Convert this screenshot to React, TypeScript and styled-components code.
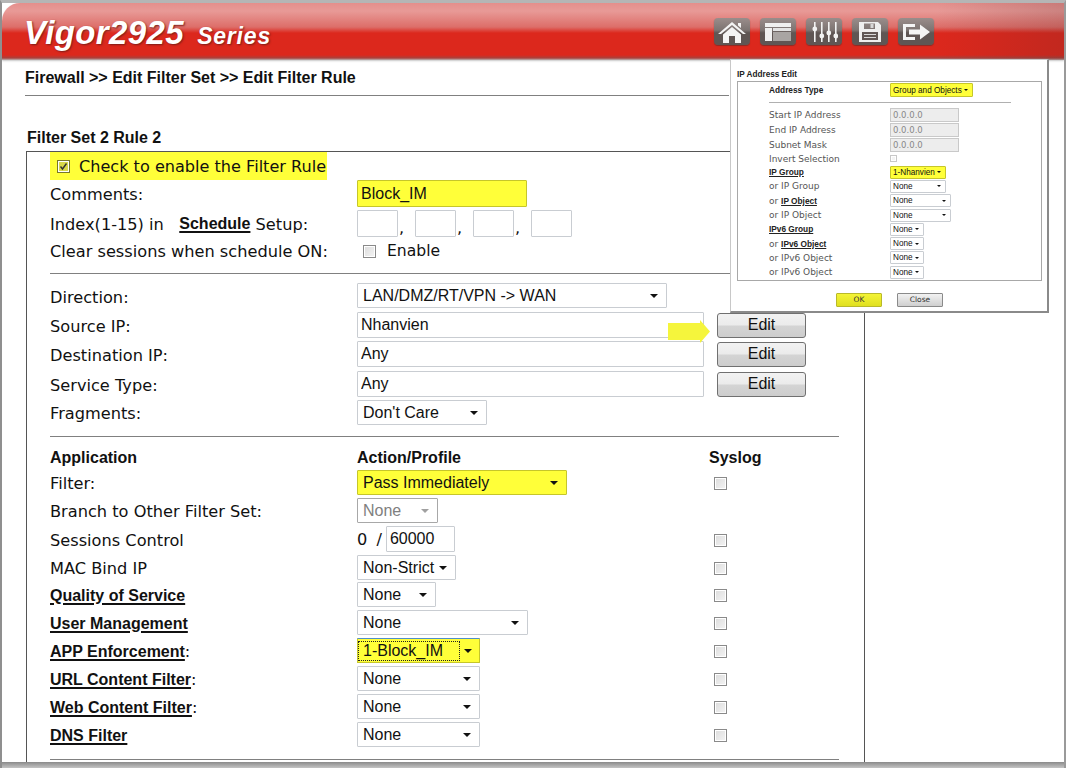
import React from 'react';
import styled, { createGlobalStyle } from 'styled-components';

const GlobalStyle = createGlobalStyle`
  html,
  body {
    margin: 0;
    padding: 0;
    background: #ffffff;
  }
`;

const controlFont = `'Liberation Sans', Arial, sans-serif`;

const Page = styled.div`
  position: relative;
  width: 1066px;
  height: 768px;
  box-sizing: border-box;
  overflow: hidden;
  background: #ffffff;
  border-top: 3px solid #b5b5b5;
  border-left: 2px solid #8f8f8f;
  border-right: 2px solid #9a9a9a;
  color: #111111;
  font-family: 'DejaVu Sans', sans-serif;
`;

const Header = styled.div`
  height: 57px;
  display: flex;
  align-items: flex-start;
  justify-content: space-between;
  padding: 0 130px 0 22px;
  border-radius: 18px 0 0 0;
  background:
    linear-gradient(to right, rgba(90, 40, 40, 0) 88%, rgba(90, 40, 40, 0.2) 100%),
    linear-gradient(
      to bottom,
      #e48f8c 0,
      #e89a97 8px,
      #dd6e69 24px,
      #dc281d 30px,
      #dc281c 52px,
      #a9413c 55px,
      #b9b1b0 57px
    );
  box-shadow: 0 1px 2px #c8c8c8;
`;

const Logo = styled.div`
  display: flex;
  align-items: baseline;
  gap: 13px;
  margin-top: 11px;
  color: #ffffff;
  font-family: 'Liberation Sans', sans-serif;
  font-style: italic;
  font-weight: 700;
  text-shadow: 1px 1px 2px #7a1d18;
`;

const LogoName = styled.span`
  font-size: 33px;
  letter-spacing: 0.4px;
`;

const LogoSeries = styled.span`
  font-size: 23px;
  letter-spacing: 0.8px;
`;

const IconBar = styled.div`
  display: flex;
  gap: 10px;
  margin-top: 15px;
`;

const IconButton = styled.div`
  width: 36px;
  height: 27px;
  display: flex;
  align-items: center;
  justify-content: center;
  border-radius: 4px;
  background: linear-gradient(to bottom, #9a8d8b, #7d7472 45%, #5f5654 55%, #5f5654);
  box-shadow: 0 1px 1px #8c2a25;
`;

const Content = styled.div`
  padding: 0 0 0 23px;
`;

const Breadcrumb = styled.div`
  padding-top: 8px;
  height: 36px;
  line-height: 19px;
  font-family: 'Liberation Sans', sans-serif;
  font-size: 16px;
  font-weight: 700;
  box-sizing: border-box;
  margin-right: 335px;
  border-bottom: 1px solid #808080;
`;

const SetTitle = styled.div`
  margin-top: 32px;
  height: 23px;
  line-height: 19px;
  padding-left: 2px;
  font-family: 'Liberation Sans', sans-serif;
  font-size: 16px;
  font-weight: 700;
`;

const Panel = styled.div`
  box-sizing: border-box;
  width: 839px;
  margin-left: 1px;
  height: 612px;
  padding: 0 25px 0 23px;
  border: 1px solid #555555;
  border-bottom: none;
`;

const EnableRow = styled.div`
  width: 277px;
  height: 28px;
  display: flex;
  align-items: center;
  gap: 9px;
  padding-left: 7px;
  box-sizing: border-box;
  background: #ffff39;
  font-size: 16.1px;
  white-space: nowrap;
`;

const Row = styled.div<{ $h: number }>`
  display: grid;
  grid-template-columns: 307px 352px 1fr;
  align-items: center;
  height: ${(p) => p.$h}px;
  font-size: 16.2px;
  white-space: nowrap;
`;

const Label = styled.div`
  display: flex;
  align-items: center;
  margin-bottom: 2px;
`;

const TopLabel = styled(Label)`
  margin-bottom: 0;
`;

const LinkLabel = styled.span`
  font-family: 'Liberation Sans', sans-serif;
  font-size: 16px;
  font-weight: 700;
  text-decoration: underline;
  text-underline-offset: 2px;
  text-decoration-thickness: 1.5px;
`;

const BoldLabel = styled.span`
  font-family: 'Liberation Sans', sans-serif;
  font-size: 16px;
  font-weight: 700;
`;

const Divider = styled.div<{ $top: number; $bottom: number }>`
  height: 1px;
  margin: ${(p) => p.$top}px 0 ${(p) => p.$bottom}px;
  background: #808080;
`;

const Cell = styled.div`
  display: flex;
  align-items: center;
  margin-bottom: 4px;
`;

const TopCell = styled(Cell)`
  margin-bottom: 2px;
`;

const TextBox = styled.input<{ $w: number; $h?: number; $mark?: boolean }>`
  box-sizing: border-box;
  flex: none;
  width: ${(p) => p.$w}px;
  height: ${(p) => p.$h ?? 26}px;
  margin: 0;
  padding: 0 3px;
  border: 1px solid ${(p) => (p.$mark ? '#c6c62a' : '#c9cdd2')};
  border-radius: 1px;
  outline: none;
  background: ${(p) => (p.$mark ? '#ffff39' : '#ffffff')};
  color: #111111;
  font-family: ${controlFont};
  font-size: 16px;
`;

const Comma = styled.span`
  width: 17px;
  padding-left: 1px;
  align-self: flex-end;
  box-sizing: border-box;
`;

const Check = styled.span<{ $light?: boolean; $size?: number }>`
  box-sizing: border-box;
  flex: none;
  display: inline-flex;
  align-items: center;
  justify-content: center;
  width: ${(p) => p.$size ?? 13}px;
  height: ${(p) => p.$size ?? 13}px;
  border: 1px solid ${(p) => (p.$light ? '#c8c8c8' : '#8a8a8a')};
  background: ${(p) =>
    p.$light ? '#f4f4f4' : 'linear-gradient(135deg, #dcdcdc, #f4f4f4)'};
  box-shadow: inset 0 0 0 1px #ffffff;
`;

const MarkedCheck = styled(Check)`
  border-color: #77772a;
  background: #d8d84a;
`;

const EnableCheck = styled(Check)`
  margin-left: 6px;
`;

const EnableText = styled.span`
  margin-left: 11px;
  font-size: 15.6px;
`;

const Select = styled.div<{
  $w: number;
  $h?: number;
  $mark?: boolean;
  $off?: boolean;
  $small?: boolean;
}>`
  box-sizing: border-box;
  flex: none;
  width: ${(p) => p.$w}px;
  height: ${(p) => p.$h ?? 25}px;
  display: flex;
  align-items: center;
  justify-content: space-between;
  padding: ${(p) => (p.$small ? '0 4px 0 2px' : '0 8px 0 5px')};
  border: 1px solid
    ${(p) => (p.$mark ? '#c6c62a' : p.$off ? '#a8a8a8' : '#c9cdd2')};
  border-radius: 1px;
  background: ${(p) => (p.$mark ? '#ffff39' : '#ffffff')};
  color: ${(p) => (p.$off ? '#808080' : '#111111')};
  font-family: ${controlFont};
  font-size: ${(p) => (p.$small ? '8.2px' : '16px')};
  white-space: nowrap;

  &::after {
    content: '';
    border-style: solid;
    border-width: ${(p) => (p.$small ? '2px 2px 0' : '4px 4px 0')};
    border-color: ${(p) => (p.$off ? '#a0a0a0' : '#111111')} transparent
      transparent;
  }
`;

const FocusText = styled.span`
  flex: 1;
  margin: 0 5px 0 -4px;
  padding: 0 0 0 4px;
  outline: 1px dotted #222222;
`;

const FocusSelect = styled(Select)`
  padding-right: 7px;
  border-top-color: #4f8fc8;
`;

const EditButton = styled.button`
  box-sizing: border-box;
  flex: none;
  width: 89px;
  height: 25px;
  margin: 0 0 0 13px;
  padding: 0;
  border: 1px solid #707070;
  border-radius: 3px;
  background: linear-gradient(to bottom, #f2f2f2 0, #ebebeb 48%, #d4d4d4 52%, #cdcdcd 100%);
  color: #111111;
  font-family: ${controlFont};
  font-size: 16px;
`;

const SourceCell = styled(Cell)`
  position: relative;
`;

const Arrow = styled.svg`
  position: absolute;
  left: 311px;
  top: 8px;
`;

const SyslogCell = styled.div`
  padding-left: 5px;
  margin-bottom: 2px;
  display: flex;
  align-items: center;
`;

const Slash = styled.span`
  margin: 0 4px 0 4px;
`;

const Popup = styled.div`
  position: absolute;
  left: 728px;
  top: 56px;
  box-sizing: border-box;
  width: 319px;
  height: 254px;
  padding: 9px 5px 0 6px;
  background: #ffffff;
  border: 1px solid #c8c8c8;
  border-right: 2px solid #8a8a8a;
  border-bottom: 2px solid #8a8a8a;
  font-size: 9px;
  color: #555555;
`;

const PopupTitle = styled.div`
  height: 12px;
  line-height: 12px;
  font-family: 'Liberation Sans', sans-serif;
  font-size: 8.2px;
  font-weight: 700;
  color: #222222;
`;

const PopupBox = styled.div`
  box-sizing: border-box;
  height: 200px;
  padding: 0 0 0 31px;
  border: 1px solid #a8a8a8;
`;

const PopupRow = styled.div<{ $h?: number }>`
  display: grid;
  grid-template-columns: 121px 1fr;
  align-items: center;
  height: ${(p) => p.$h ?? 14.3}px;
  white-space: nowrap;
`;

const PopupHead = styled.span`
  font-family: 'Liberation Sans', sans-serif;
  font-size: 8.3px;
  font-weight: 700;
  color: #222222;
`;

const PopupLink = styled(PopupHead)`
  text-decoration: underline;
`;

const PopupDivider = styled.div`
  height: 1px;
  width: 242px;
  margin: 4px 0 4px;
  background: #b0b0b0;
`;

const GreyBox = styled.div`
  box-sizing: border-box;
  width: 69px;
  height: 14px;
  padding-left: 2px;
  line-height: 13px;
  background: #ededed;
  border: 1px solid #c9c9c9;
  color: #888888;
  font-size: 8.5px;
`;

const PopupFooter = styled.div`
  display: flex;
  justify-content: center;
  gap: 15px;
  padding: 12px 0 0;
`;

const PopupButton = styled.div<{ $mark?: boolean }>`
  box-sizing: border-box;
  width: 46px;
  height: 14px;
  line-height: 12px;
  text-align: center;
  font-size: 7.5px;
  border: 1px solid ${(p) => (p.$mark ? '#b9b92a' : '#8a8a8a')};
  border-radius: 1px;
  color: #333333;
  background: ${(p) =>
    p.$mark
      ? 'linear-gradient(to bottom, #f4f436, #e0e020)'
      : 'linear-gradient(to bottom, #f2f2f2, #cfcfcf)'};
`;

const Shade = styled.div`
  position: absolute;
  left: 0;
  right: 0;
  bottom: 0;
  height: 6px;
  background: linear-gradient(to bottom, #8a8a8a, #c4c4c4);
`;

const HomeIcon = () => (
  <svg width="30" height="24" viewBox="0 0 30 24">
    <path d="M15 2 L29 14 L26 14 L15 5 L4 14 L1 14 Z M21 3 h3 v5 l-3 -2.5 Z" fill="#f4f4f4" />
    <path d="M6 14.5 L15 7 L24 14.5 V23 H18 V16 H12 V23 H6 Z" fill="#f4f4f4" />
  </svg>
);

const PanelIcon = () => (
  <svg width="28" height="20" viewBox="0 0 28 20">
    <path d="M1 1 H27 V5 H1 Z M1 6 H8 V19 H1 Z" fill="#f0f0f0" />
    <path d="M9 6 H27 V9 H9 Z" fill="#e4e4e4" />
    <path d="M9 10 H27 V19 H9 Z" fill="#a9a5a3" />
  </svg>
);

const SlidersIcon = () => (
  <svg width="28" height="22" viewBox="0 0 28 22" fill="#f2f2f2">
    <path d="M4 1 h1.6 v20 h-1.6 Z M11 1 h1.6 v20 h-1.6 Z M18 1 h1.6 v20 h-1.6 Z M25 1 h1.6 v20 h-1.6 Z" />
    <circle cx="4.8" cy="8" r="2.4" />
    <circle cx="11.8" cy="15" r="2.4" />
    <circle cx="18.8" cy="12" r="2.4" />
    <circle cx="25.8" cy="15" r="2.4" />
  </svg>
);

const SaveIcon = () => (
  <svg width="24" height="22" viewBox="0 0 24 22">
    <path
      d="M1 1 H20 L23 4 V21 H1 Z M6 2.5 V8 H17 V2.5 Z M4 11 V19 H20 V11 Z"
      fill="#eeeeee"
      fillRule="evenodd"
    />
    <path d="M12.5 3 h3 v4 h-3 Z M6 13 h12 v1 H6 Z M6 16 h12 v1 H6 Z" fill="#d8d8d8" />
  </svg>
);

const ExitIcon = () => (
  <svg width="29" height="20" viewBox="0 0 29 20" fill="#f4f4f4">
    <path d="M1 2 H13 V5 H4 V15 H13 V18 H1 Z" />
    <path d="M7 7.5 H18 V2.5 L28 10 L18 17.5 V12.5 H7 Z" />
  </svg>
);

const App: React.FC = () => {
  const noop = () => undefined;

  return (
    <Page>
      <GlobalStyle />
      <Header>
        <Logo>
          <LogoName>Vigor2925</LogoName>
          <LogoSeries>Series</LogoSeries>
        </Logo>
        <IconBar>
          <IconButton><HomeIcon /></IconButton>
          <IconButton><PanelIcon /></IconButton>
          <IconButton><SlidersIcon /></IconButton>
          <IconButton><SaveIcon /></IconButton>
          <IconButton><ExitIcon /></IconButton>
        </IconBar>
      </Header>

      <Content>
        <Breadcrumb>Firewall &gt;&gt; Edit Filter Set &gt;&gt; Edit Filter Rule</Breadcrumb>
        <SetTitle>Filter Set 2 Rule 2</SetTitle>

        <Panel>
          <EnableRow>
            <MarkedCheck>
              <svg width="9" height="9" viewBox="0 0 9 9">
                <path d="M1.5 4.5 L3.5 7 L7.5 1.5" fill="none" stroke="#333" strokeWidth="1.4" />
              </svg>
            </MarkedCheck>
            Check to enable the Filter Rule
          </EnableRow>

          <Row $h={29}>
            <TopLabel>Comments:</TopLabel>
            <TopCell><TextBox $w={170} $h={27} $mark value="Block_IM" onChange={noop} /></TopCell>
          </Row>
          <Row $h={30}>
            <TopLabel>
              Index(1-15) in&nbsp;&nbsp;&nbsp;<LinkLabel>Schedule</LinkLabel>&nbsp;Setup:
            </TopLabel>
            <TopCell>
              <TextBox $w={41} $h={27} value="" onChange={noop} />
              <Comma>,</Comma>
              <TextBox $w={41} $h={27} value="" onChange={noop} />
              <Comma>,</Comma>
              <TextBox $w={41} $h={27} value="" onChange={noop} />
              <Comma>,</Comma>
              <TextBox $w={41} $h={27} value="" onChange={noop} />
            </TopCell>
          </Row>
          <Row $h={26}>
            <Label>Clear sessions when schedule ON:</Label>
            <TopCell>
              <EnableCheck />
              <EnableText>Enable</EnableText>
            </TopCell>
          </Row>
          <Divider $top={8} $bottom={9} />

          <Row $h={29}>
            <TopLabel>Direction:</TopLabel>
            <Cell><Select $w={310}>LAN/DMZ/RT/VPN -&gt; WAN</Select></Cell>
          </Row>
          <Row $h={29}>
            <Label>Source IP:</Label>
            <SourceCell>
              <TextBox $w={347} value="Nhanvien" onChange={noop} />
              <EditButton>Edit</EditButton>
              <Arrow width="43" height="23" viewBox="0 0 43 23">
                <path d="M0 3 H32 V0 L42 11.5 L32 23 V20 H0 Z" fill="#f5f53c" />
              </Arrow>
            </SourceCell>
          </Row>
          <Row $h={30}>
            <Label>Destination IP:</Label>
            <Cell>
              <TextBox $w={347} value="Any" onChange={noop} />
              <EditButton>Edit</EditButton>
            </Cell>
          </Row>
          <Row $h={29}>
            <Label>Service Type:</Label>
            <Cell>
              <TextBox $w={347} value="Any" onChange={noop} />
              <EditButton>Edit</EditButton>
            </Cell>
          </Row>
          <Row $h={28}>
            <Label>Fragments:</Label>
            <Cell><Select $w={130}>Don&apos;t Care</Select></Cell>
          </Row>
          <Divider $top={8} $bottom={8} />

          <Row $h={25}>
            <TopLabel><BoldLabel>Application</BoldLabel></TopLabel>
            <TopLabel><BoldLabel>Action/Profile</BoldLabel></TopLabel>
            <BoldLabel>Syslog</BoldLabel>
          </Row>
          <Row $h={28}>
            <Label>Filter:</Label>
            <Cell><Select $w={210} $mark>Pass Immediately</Select></Cell>
            <SyslogCell><Check /></SyslogCell>
          </Row>
          <Row $h={28}>
            <Label>Branch to Other Filter Set:</Label>
            <Cell><Select $w={81} $off>None</Select></Cell>
          </Row>
          <Row $h={29}>
            <Label>Sessions Control</Label>
            <Cell>
              0<Slash>&nbsp;/</Slash>
              <TextBox $w={69} value="60000" onChange={noop} />
            </Cell>
            <SyslogCell><Check /></SyslogCell>
          </Row>
          <Row $h={27}>
            <Label>MAC Bind IP</Label>
            <Cell><Select $w={99}>Non-Strict</Select></Cell>
            <SyslogCell><Check /></SyslogCell>
          </Row>
          <Row $h={28}>
            <Label><LinkLabel>Quality of Service</LinkLabel></Label>
            <Cell><Select $w={79}>None</Select></Cell>
            <SyslogCell><Check /></SyslogCell>
          </Row>
          <Row $h={28}>
            <Label><LinkLabel>User Management</LinkLabel></Label>
            <Cell><Select $w={171}>None</Select></Cell>
            <SyslogCell><Check /></SyslogCell>
          </Row>
          <Row $h={28}>
            <Label><LinkLabel>APP Enforcement</LinkLabel>:</Label>
            <Cell>
              <FocusSelect $w={123} $mark><FocusText>1-Block_IM</FocusText></FocusSelect>
            </Cell>
            <SyslogCell><Check /></SyslogCell>
          </Row>
          <Row $h={28}>
            <Label><LinkLabel>URL Content Filter</LinkLabel>:</Label>
            <Cell><Select $w={123}>None</Select></Cell>
            <SyslogCell><Check /></SyslogCell>
          </Row>
          <Row $h={28}>
            <Label><LinkLabel>Web Content Filter</LinkLabel>:</Label>
            <Cell><Select $w={123}>None</Select></Cell>
            <SyslogCell><Check /></SyslogCell>
          </Row>
          <Row $h={28}>
            <Label><LinkLabel>DNS Filter</LinkLabel></Label>
            <Cell><Select $w={123}>None</Select></Cell>
            <SyslogCell><Check /></SyslogCell>
          </Row>
          <Divider $top={9} $bottom={0} />
        </Panel>
      </Content>

      <Popup>
        <PopupTitle>IP Address Edit</PopupTitle>
        <PopupBox>
          <PopupRow $h={16}>
            <PopupHead>Address Type</PopupHead>
            <Select $w={83} $h={14} $mark $small>Group and Objects</Select>
          </PopupRow>
          <PopupDivider />
          <PopupRow $h={15}><span>Start IP Address</span><GreyBox>0.0.0.0</GreyBox></PopupRow>
          <PopupRow $h={15}><span>End IP Address</span><GreyBox>0.0.0.0</GreyBox></PopupRow>
          <PopupRow $h={15}><span>Subnet Mask</span><GreyBox>0.0.0.0</GreyBox></PopupRow>
          <PopupRow $h={13}><span>Invert Selection</span><Check $light $size={7} /></PopupRow>
          <PopupRow><PopupLink>IP Group</PopupLink><Select $w={56} $h={13} $mark $small>1-Nhanvien</Select></PopupRow>
          <PopupRow><span>or IP Group</span><Select $w={56} $h={13} $small>None</Select></PopupRow>
          <PopupRow><span>or <PopupLink>IP Object</PopupLink></span><Select $w={61} $h={13} $small>None</Select></PopupRow>
          <PopupRow><span>or IP Object</span><Select $w={61} $h={13} $small>None</Select></PopupRow>
          <PopupRow><PopupLink>IPv6 Group</PopupLink><Select $w={34} $h={13} $small>None</Select></PopupRow>
          <PopupRow><span>or <PopupLink>IPv6 Object</PopupLink></span><Select $w={34} $h={13} $small>None</Select></PopupRow>
          <PopupRow><span>or IPv6 Object</span><Select $w={34} $h={13} $small>None</Select></PopupRow>
          <PopupRow><span>or IPv6 Object</span><Select $w={34} $h={13} $small>None</Select></PopupRow>
        </PopupBox>
        <PopupFooter>
          <PopupButton $mark>OK</PopupButton>
          <PopupButton>Close</PopupButton>
        </PopupFooter>
      </Popup>

      <Shade />
    </Page>
  );
};

export default App;
